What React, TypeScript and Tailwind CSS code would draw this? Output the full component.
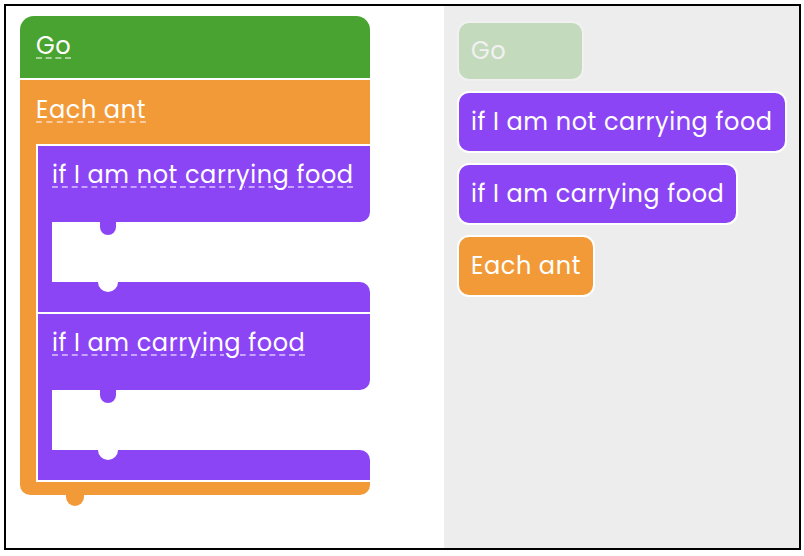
import React from "react";

const FONT = { fontFamily: "Poppins, Inter, 'Noto Sans', sans-serif" };

function Label({ children, deco }: { children: React.ReactNode; deco: string }) {
  return (
    <span
      className={`text-[24px] leading-[26px] tracking-[0.6px] text-white underline decoration-dashed decoration-2 underline-offset-[3px] ${deco}`}
    >
      {children}
    </span>
  );
}

function IfBlock({ text }: { text: string }) {
  return (
    <div className="flex flex-col">
      <div className="relative h-[76px] bg-[#8b45f5] rounded-br-[10px] pl-[14px] pt-[16px]">
        <Label deco="decoration-[#c5a4fa]">{text}</Label>
        <div className="absolute left-[62px] top-full w-4 h-[13px] bg-[#8b45f5] rounded-b-[8px]" />
      </div>
      <div className="h-[60px] flex">
        <div className="w-[14px] bg-[#8b45f5]" />
      </div>
      <div className="relative h-[30px] bg-[#8b45f5] rounded-tr-[10px]">
        <div className="absolute left-[60px] top-0 w-5 h-[10px] bg-white rounded-b-[10px]" />
      </div>
    </div>
  );
}

function Pill({ children, cls }: { children: React.ReactNode; cls: string }) {
  return (
    <div
      className={`flex items-center border-2 border-white rounded-[12px] px-[12px] text-[24px] leading-[26px] tracking-[0.6px] text-white ${cls}`}
    >
      {children}
    </div>
  );
}

export default function App() {
  return (
    <div className="w-[804px] h-[556px] bg-white pt-1 pl-1" style={FONT}>
      <div className="w-[797px] h-[546px] border-2 border-black flex">
        <div className="w-[438px] h-full bg-white pl-[14px] pt-[10px]">
          <div className="w-[350px] flex flex-col gap-[2px]">
            <div className="h-[62px] bg-[#49a331] rounded-t-[14px] pl-4 pt-[17px]">
              <Label deco="decoration-[#a6d29a]">Go</Label>
            </div>
            <div className="relative bg-[#f29a38] rounded-b-[10px] pl-4">
              <div className="h-[64px] pt-[17px]">
                <Label deco="decoration-[#f8cca0]">Each ant</Label>
              </div>
              <div className="flex flex-col gap-[2px] bg-white border-y-2 border-l-2 border-white">
                <IfBlock text="if I am not carrying food" />
                <IfBlock text="if I am carrying food" />
              </div>
              <div className="h-[13px]" />
              <div className="absolute left-[46px] top-full w-[18px] h-[11px] bg-[#f29a38] rounded-b-[9px]" />
            </div>
          </div>
        </div>
        <div className="flex-1 h-full bg-[#ededed] pl-[13px] pt-[15px] flex flex-col items-start gap-[10px]">
          <Pill cls="h-[60px] w-[127px] bg-[#49a331] opacity-25">Go</Pill>
          <Pill cls="h-[62px] bg-[#8b45f5]">if I am not carrying food</Pill>
          <Pill cls="h-[62px] bg-[#8b45f5]">if I am carrying food</Pill>
          <Pill cls="h-[62px] bg-[#f29a38]">Each ant</Pill>
        </div>
      </div>
    </div>
  );
}
